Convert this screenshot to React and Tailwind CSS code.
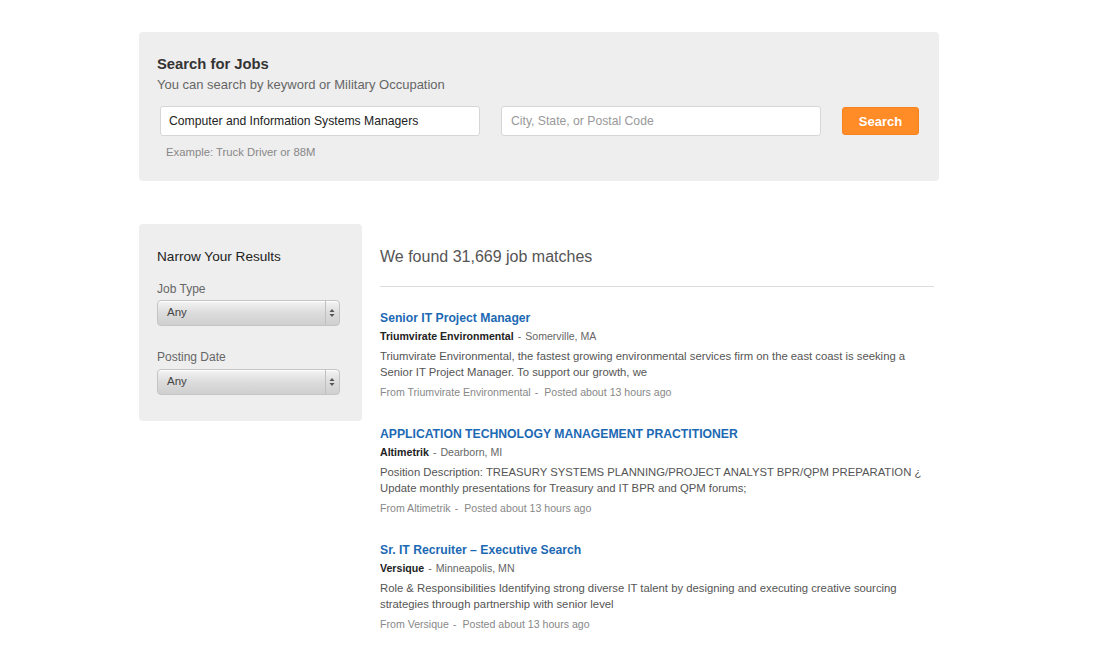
import React from "react";

const jobs = [
  {
    title: "Senior IT Project Manager",
    company: "Triumvirate Environmental",
    location: "Somerville, MA",
    desc: "Triumvirate Environmental, the fastest growing environmental services firm on the east coast is seeking a Senior IT Project Manager. To support our growth, we",
    from: "From Triumvirate Environmental",
  },
  {
    title: "APPLICATION TECHNOLOGY MANAGEMENT PRACTITIONER",
    company: "Altimetrik",
    location: "Dearborn, MI",
    desc: "Position Description: TREASURY SYSTEMS PLANNING/PROJECT ANALYST BPR/QPM PREPARATION ¿ Update monthly presentations for Treasury and IT BPR and QPM forums;",
    from: "From Altimetrik",
  },
  {
    title: "Sr. IT Recruiter – Executive Search",
    company: "Versique",
    location: "Minneapolis, MN",
    desc: "Role & Responsibilities Identifying strong diverse IT talent by designing and executing creative sourcing strategies through partnership with senior level",
    from: "From Versique",
  },
];

const FakeSelect = () => (
  <div className="flex h-[26px] w-[183px] items-center rounded-[4px] border border-[#c4c4c4] bg-gradient-to-b from-[#f4f4f4] via-[#dcdcdc] to-[#cfcfcf] shadow-[inset_0_1px_0_#fff]">
    <span className="flex-1 pl-[9px] text-[11.5px] text-[#444]">Any</span>
    <div className="flex h-full w-[14px] flex-col items-center justify-center border-l border-[#c0c0c0] pr-[1px]">
      <svg width="6" height="10" viewBox="0 0 6 10">
        <path d="M3 1 L5.5 4 H0.5 Z" fill="#555" />
        <path d="M3 9 L5.5 6 H0.5 Z" fill="#555" />
      </svg>
    </div>
  </div>
);

export default function App() {
  return (
    <div className="min-h-screen bg-white font-['Liberation_Sans',Arial,sans-serif]">
      <div className="ml-[139px] w-[800px] pt-[32px]">
        {/* Search panel */}
        <div className="rounded-[4px] bg-[#eeeeee] pb-[21px] pl-[18px] pr-[19px] pt-[22px]">
          <h1 className="text-[14.8px] font-bold leading-[20px] text-[#333]">Search for Jobs</h1>
          <p className="mt-[2px] text-[13px] leading-[18px] text-[#666]">
            You can search by keyword or Military Occupation
          </p>
          <div className="ml-[3px] mt-[12px] flex items-center">
            <div className="flex h-[30px] w-[320px] items-center rounded-[3px] border border-[#d6d6d6] bg-white px-[8px] text-[12.2px] text-[#222]">
              Computer and Information Systems Managers
            </div>
            <div className="ml-[21px] flex h-[30px] w-[320px] items-center rounded-[3px] border border-[#d6d6d6] bg-white px-[9px] text-[12.2px] text-[#999]">
              City, State, or Postal Code
            </div>
            <button className="ml-[21px] h-[28px] w-[77px] rounded-[3px] border border-[#f58420] bg-[#ff8c27] pt-[1px] text-[13px] font-bold text-white">
              Search
            </button>
          </div>
          <p className="ml-[9px] mt-[8px] text-[11.3px] leading-[16px] text-[#888]">Example: Truck Driver or 88M</p>
        </div>

        {/* Body */}
        <div className="mt-[43px] flex items-start">
          <aside className="w-[223px] rounded-[4px] bg-[#eeeeee] pb-[26px] pl-[18px] pr-[22px] pt-[24px]">
            <h2 className="text-[13.6px] leading-[18px] text-[#222]">Narrow Your Results</h2>
            <div className="mt-[15px] text-[12px] leading-[16px] text-[#666]">Job Type</div>
            <div className="mt-[3px]">
              <FakeSelect />
            </div>
            <div className="mt-[23px] text-[12px] leading-[16px] text-[#666]">Posting Date</div>
            <div className="mt-[4px]">
              <FakeSelect />
            </div>
          </aside>

          <main className="ml-[18px] w-[554px]">
            <h2 className="mt-[21px] text-[16px] leading-[24px] text-[#555]">We found 31,669 job matches</h2>
            <hr className="mt-[17px] border-t border-[#dddddd]" />
            <div className="mt-[22px] flex flex-col gap-[25px]">
              {jobs.map((job) => (
                <div key={job.title}>
                  <a className="block text-[12.2px] font-bold leading-[18px] text-[#1c69b3]">{job.title}</a>
                  <div className="text-[10.6px] leading-[18px] text-[#666]">
                    <span className="font-bold text-[#222]">{job.company}</span>
                    <span className="ml-[4px]">-</span>
                    <span className="ml-[4px]">{job.location}</span>
                  </div>
                  <p className="mt-[3px] text-[11.3px] leading-[16px] text-[#555]">{job.desc}</p>
                  <div className="mt-[4px] text-[10.6px] leading-[16px] text-[#888]">
                    {job.from}
                    <span className="ml-[4px] mr-[6px]">-</span>
                    Posted about 13 hours ago
                  </div>
                </div>
              ))}
            </div>
          </main>
        </div>
      </div>
    </div>
  );
}
